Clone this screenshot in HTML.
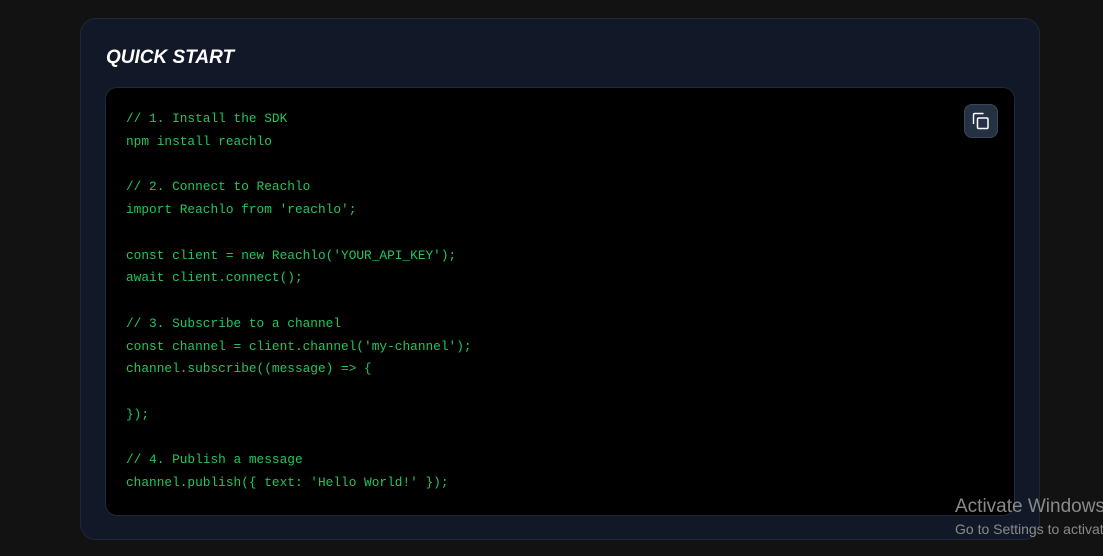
<!DOCTYPE html>
<html><head><meta charset="utf-8"><style>
html,body{margin:0;padding:0;width:1103px;height:556px;overflow:hidden;background:#121212;font-family:"Liberation Sans",sans-serif;}
.card{position:absolute;left:80px;top:18px;width:960px;height:522px;background:#111827;border:1px solid #1f2937;border-radius:16px;box-sizing:border-box;}
h2{position:absolute;left:25px;top:28px;margin:0;font-size:19px;font-weight:bold;font-style:italic;color:#fff;letter-spacing:0px;}
.code{position:absolute;left:24px;top:68px;width:910px;height:429px;background:#000;border:1px solid #1f2937;border-radius:12px;box-sizing:border-box;}
pre{margin:0;position:absolute;left:20px;top:20px;font-family:"Liberation Mono",monospace;font-size:12.8px;line-height:22.75px;color:#22c55e;}
.copy{position:absolute;left:858px;top:16px;width:34px;height:34px;background:#243142;border:1px solid #3a4658;border-radius:8px;box-sizing:border-box;}
.wmbox{position:absolute;left:0;top:0;width:1103px;height:556px;overflow:hidden;}
.wm{position:absolute;left:955px;color:#8a8a8a;white-space:nowrap;font-family:"Liberation Sans",sans-serif;}
</style></head><body>
<div class="card">
<h2>QUICK START</h2>
<div class="code">
<pre>// 1. Install the SDK
npm install reachlo

// 2. Connect to Reachlo
import Reachlo from 'reachlo';

const client = new Reachlo('YOUR_API_KEY');
await client.connect();

// 3. Subscribe to a channel
const channel = client.channel('my-channel');
channel.subscribe((message) =&gt; {

});

// 4. Publish a message
channel.publish({ text: 'Hello World!' });</pre>
<div class="copy"><svg width="34" height="34" viewBox="0 0 34 34" style="position:absolute;left:-1px;top:-1px"><path d="M9.5 20 V11 Q9.5 9.5 11 9.5 H19.5" fill="none" stroke="#fff" stroke-width="1.4"/><rect x="13.5" y="14" width="10.5" height="10.5" rx="1.2" fill="none" stroke="#fff" stroke-width="1.5"/></svg></div>
</div>
</div>
<div class="wmbox">
<div class="wm" style="top:496px;font-size:19px;">Activate Windows</div>
<div class="wm" style="top:521px;font-size:14px;">Go to Settings to activate Windows.</div>
</div>
</body></html>
